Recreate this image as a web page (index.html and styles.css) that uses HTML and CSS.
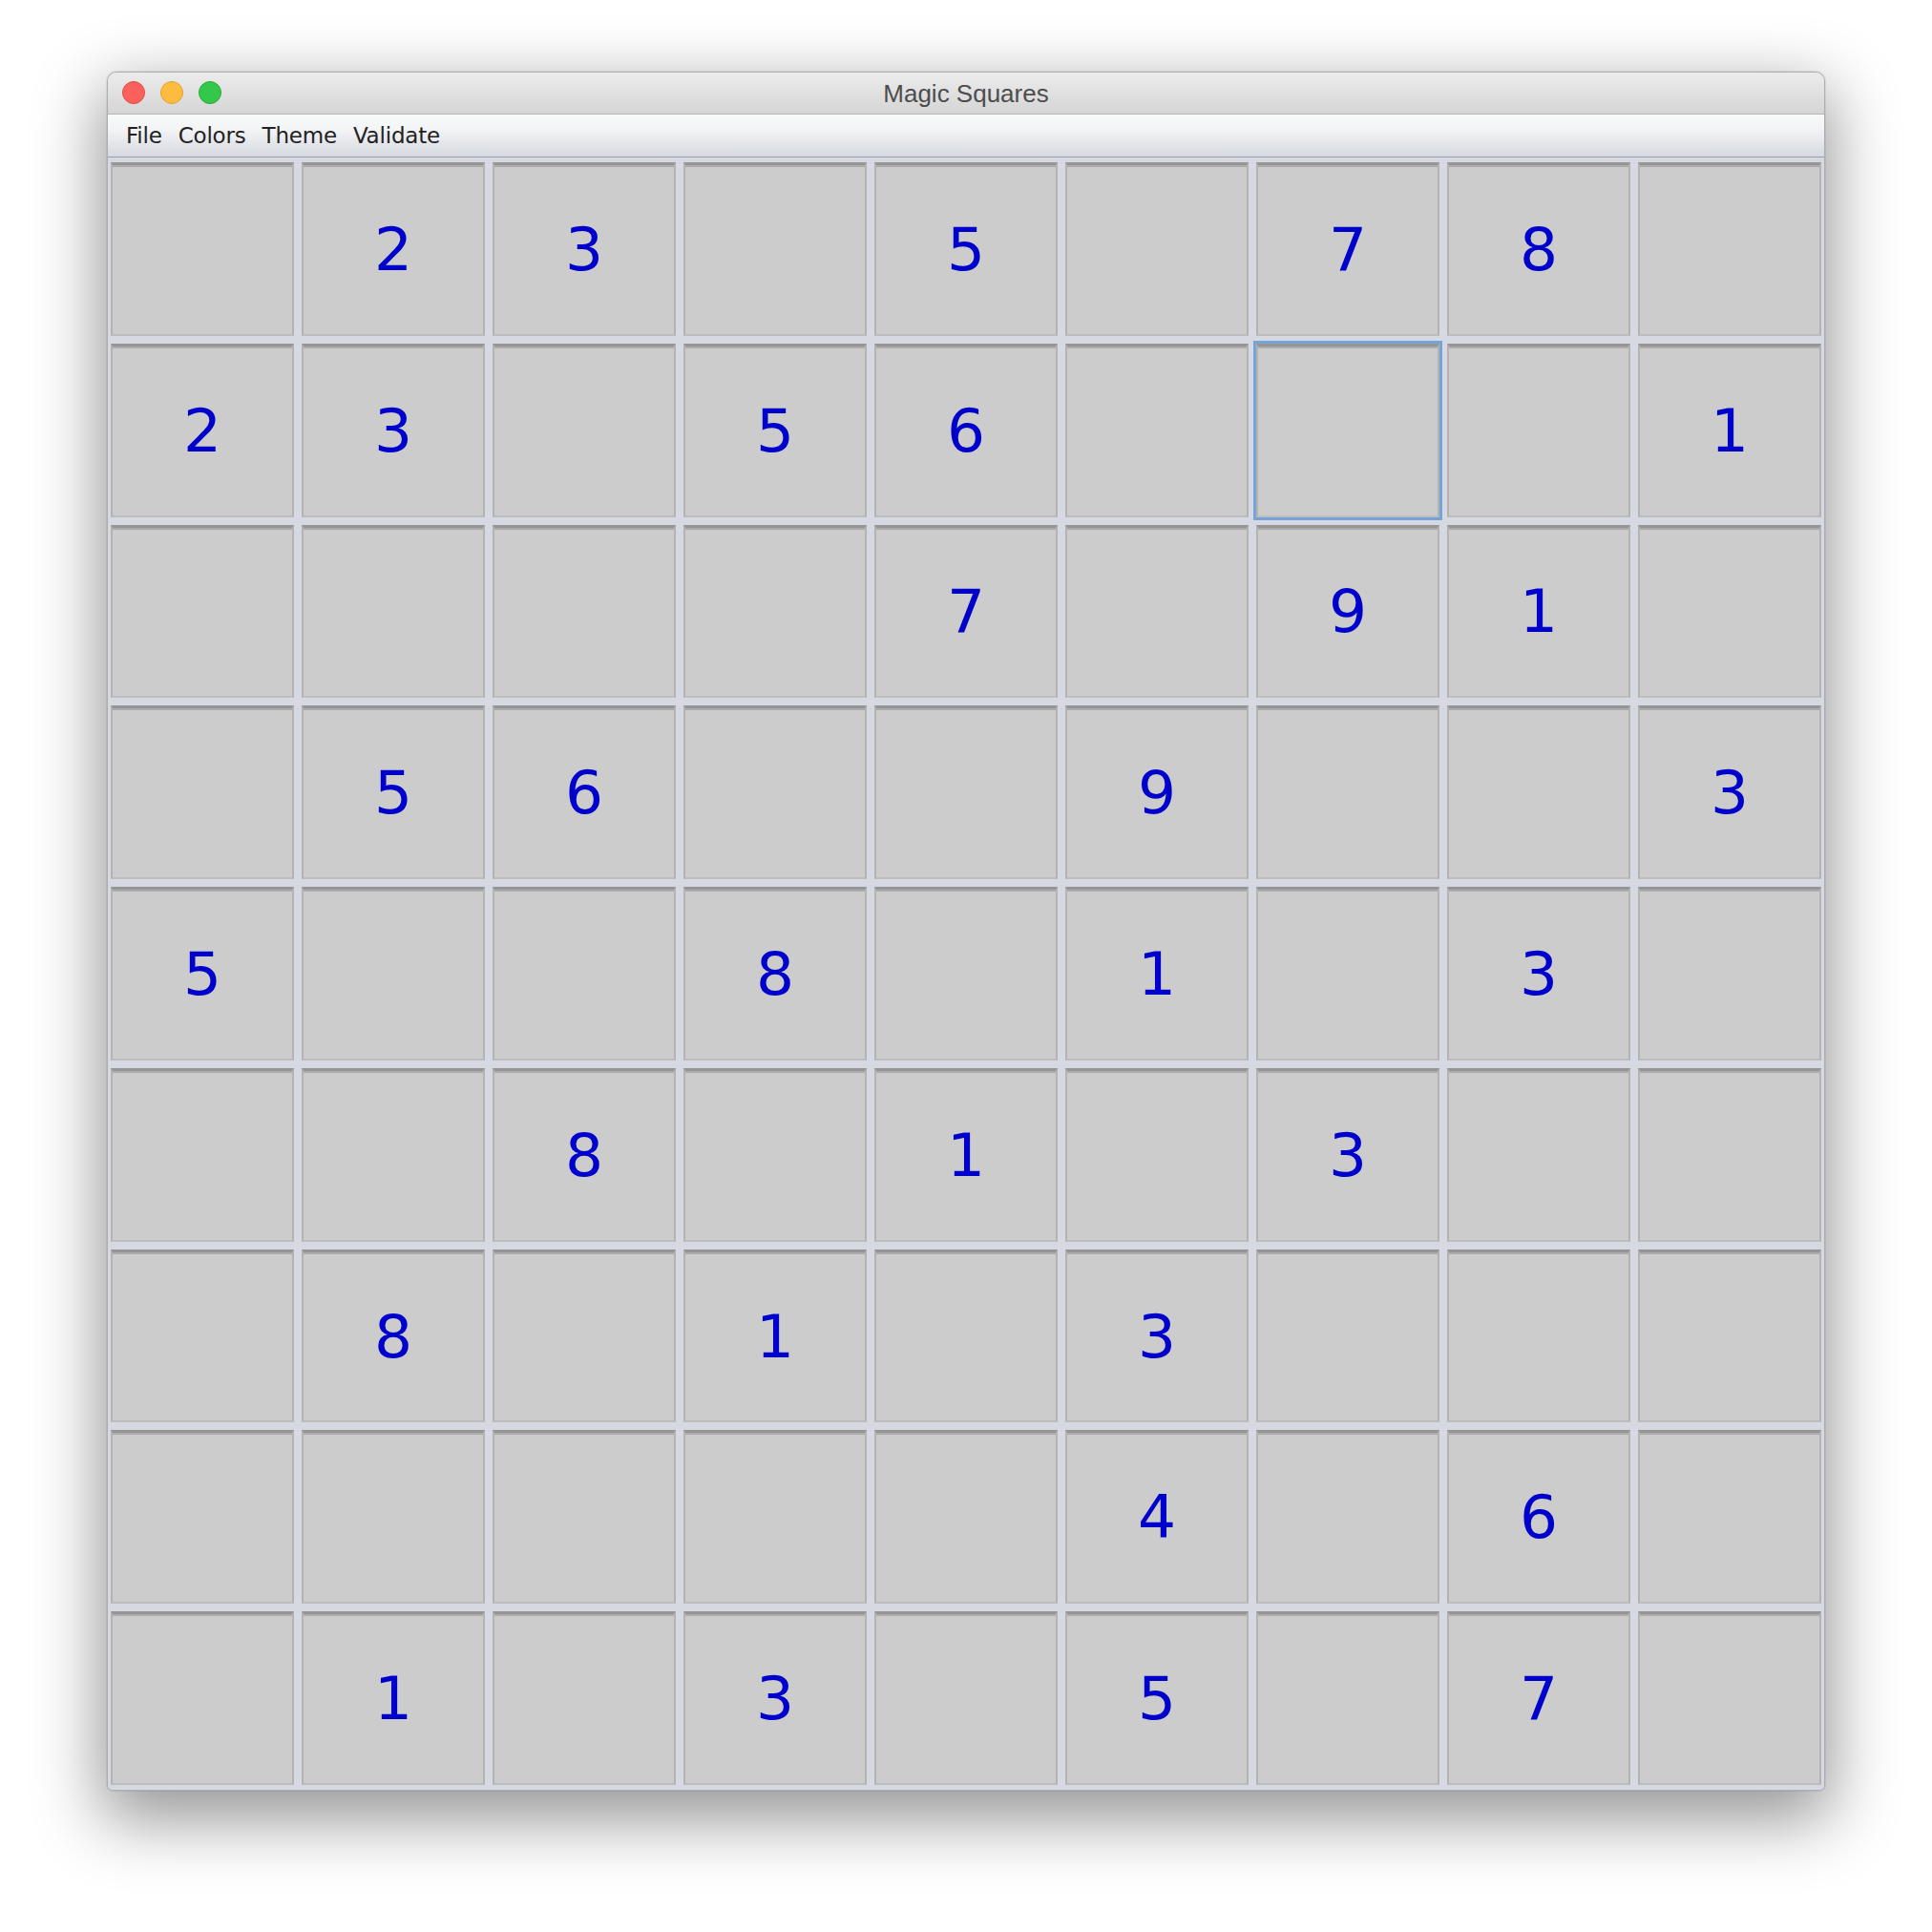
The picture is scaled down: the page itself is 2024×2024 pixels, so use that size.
FILE: index.html
```html
<!DOCTYPE html>
<html>
<head>
<meta charset="utf-8">
<title>Magic Squares</title>
<link rel="stylesheet" href="styles.css">
</head>
<body>
<div class="window">
  <div class="titlebar">
    <div class="lights">
      <span class="light red"></span>
      <span class="light yellow"></span>
      <span class="light green"></span>
    </div>
    <div class="title">Magic Squares</div>
  </div>
  <div class="menubar">
    <span class="menu">File</span>
    <span class="menu">Colors</span>
    <span class="menu">Theme</span>
    <span class="menu">Validate</span>
  </div>
  <div class="board">
    <div class="cell"></div><div class="cell">2</div><div class="cell">3</div><div class="cell"></div><div class="cell">5</div><div class="cell"></div><div class="cell">7</div><div class="cell">8</div><div class="cell"></div>
    <div class="cell">2</div><div class="cell">3</div><div class="cell"></div><div class="cell">5</div><div class="cell">6</div><div class="cell"></div><div class="cell selected"></div><div class="cell"></div><div class="cell">1</div>
    <div class="cell"></div><div class="cell"></div><div class="cell"></div><div class="cell"></div><div class="cell">7</div><div class="cell"></div><div class="cell">9</div><div class="cell">1</div><div class="cell"></div>
    <div class="cell"></div><div class="cell">5</div><div class="cell">6</div><div class="cell"></div><div class="cell"></div><div class="cell">9</div><div class="cell"></div><div class="cell"></div><div class="cell">3</div>
    <div class="cell">5</div><div class="cell"></div><div class="cell"></div><div class="cell">8</div><div class="cell"></div><div class="cell">1</div><div class="cell"></div><div class="cell">3</div><div class="cell"></div>
    <div class="cell"></div><div class="cell"></div><div class="cell">8</div><div class="cell"></div><div class="cell">1</div><div class="cell"></div><div class="cell">3</div><div class="cell"></div><div class="cell"></div>
    <div class="cell"></div><div class="cell">8</div><div class="cell"></div><div class="cell">1</div><div class="cell"></div><div class="cell">3</div><div class="cell"></div><div class="cell"></div><div class="cell"></div>
    <div class="cell"></div><div class="cell"></div><div class="cell"></div><div class="cell"></div><div class="cell"></div><div class="cell">4</div><div class="cell"></div><div class="cell">6</div><div class="cell"></div>
    <div class="cell"></div><div class="cell">1</div><div class="cell"></div><div class="cell">3</div><div class="cell"></div><div class="cell">5</div><div class="cell"></div><div class="cell">7</div><div class="cell"></div>
  </div>
</div>
</body>
</html>
```
FILE: styles.css
```css
html, body {
  margin: 0;
  padding: 0;
  background: #ffffff;
}
body {
  padding: 75px 0 0 112px;
  height: 2024px;
  box-sizing: border-box;
  overflow: hidden;
}
.window {
  width: 1800px;
  box-sizing: border-box;
  border: 1px solid #aeaeae;
  border-radius: 10px 10px 6px 6px;
  overflow: hidden;
  background: #d6d9e1;
  box-shadow: 0 24px 70px 6px rgba(0, 0, 0, 0.42), 0 0 0 1px rgba(0, 0, 0, 0.06);
}
.titlebar {
  height: 43px;
  border-bottom: 1px solid #b6b6b6;
  background: linear-gradient(#ececec, #d5d5d5);
  display: flex;
  align-items: center;
  position: relative;
}
.lights {
  display: flex;
  gap: 16px;
  padding-left: 15px;
  position: absolute;
  left: 0;
  top: 9px;
}
.light {
  width: 22px;
  height: 22px;
  border-radius: 50%;
  display: block;
}
.red { background: #fc605c; border: 1px solid #de4a45; }
.yellow { background: #fdbc40; border: 1px solid #dea133; }
.green { background: #34c84a; border: 1px solid #28a838; }
.title {
  flex: 1;
  text-align: center;
  font-family: "Liberation Sans", Arial, sans-serif;
  font-size: 26px;
  color: #4d4d4d;
  padding-top: 1px;
}
.menubar {
  height: 44px;
  border-bottom: 1px solid #9b9ea7;
  background: linear-gradient(#f8f9f9 0%, #f3f4f5 35%, #d6d9e1 100%);
  display: flex;
  align-items: center;
  gap: 17px;
  padding-left: 19px;
  font-family: "DejaVu Sans", sans-serif;
  font-size: 23px;
  color: #222222;
}
.menu {
  padding-bottom: 1px;
  letter-spacing: -0.2px;
}
.board {
  height: 1700px;
  padding: 5px 3px 5px 3px;
  display: grid;
  grid-template-columns: repeat(9, 192px);
  grid-template-rows: repeat(9, 1fr);
  gap: 8px;
  background: #d6d9e1;
}
.cell {
  box-sizing: border-box;
  background: #cccccc;
  border-top: 3px solid #959595;
  border-left: 2px solid #b3b3b3;
  border-right: 2px solid #b3b3b3;
  border-bottom: 2px solid #bdbdbd;
  box-shadow: inset 0 2px 0 #ababab;
  display: flex;
  align-items: center;
  justify-content: center;
  font-family: "DejaVu Sans", sans-serif;
  font-size: 63px;
  line-height: 1;
  color: #0000cc;
}
.selected {
  position: relative;
  z-index: 1;
  box-shadow: inset 0 2px 0 #ababab, 0 0 0 3px #74a4d8;
}
```
